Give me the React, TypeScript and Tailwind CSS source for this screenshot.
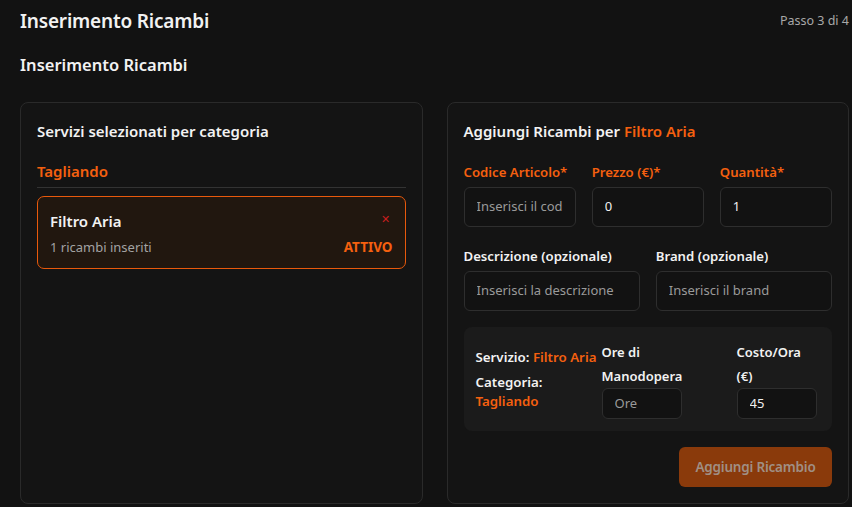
import React from "react";

const F = { fontFamily: '"Noto Sans", "Open Sans", sans-serif' };

function Input({ value, placeholder, className = "" }: { value?: string; placeholder?: string; className?: string }) {
  return (
    <div className={`flex items-center rounded-[6px] border border-[#2e2e2e] bg-[#121212] px-3 text-[13px] ${className}`}>
      <div className="w-full overflow-hidden whitespace-nowrap">
        {value ? <span className="text-[#f0f0f0]">{value}</span> : <span className="text-[#9a9a9a]">{placeholder}</span>}
      </div>
    </div>
  );
}

export default function App() {
  return (
    <div className="min-h-screen bg-[#121212] pl-5 pr-[3px] pt-[7px] text-[#f2f2f2]" style={F}>
      <div className="flex h-[28px] items-center justify-between">
        <h1 className="text-[19px] font-semibold tracking-[-0.2px]">Inserimento Ricambi</h1>
        <span className="text-[12.5px] text-[#a8a8a8]">Passo 3 di 4</span>
      </div>
      <h2 className="mt-[17px] h-[26px] text-[16.5px] font-semibold leading-[26px]">Inserimento Ricambi</h2>
      <div className="mt-[24px] grid grid-cols-2 gap-6">
        {/* Left card */}
        <div className="rounded-[8px] border border-[#2a2a2a] bg-[#141414] px-4 pt-4">
          <div className="h-[24px] text-[15px] font-semibold leading-[24px]">Servizi selezionati per categoria</div>
          <div className="mt-[16px] border-b border-[#333] pb-[4px] text-[15px] font-semibold leading-[24px] text-[#f5600f]">
            Tagliando
          </div>
          <div className="mt-[8px] rounded-[7px] border border-[#e8590c] bg-[#21170f] px-3 pb-[9px] pt-[12px]">
            <div className="flex items-start justify-between">
              <span className="text-[15px] font-semibold leading-[24px]">Filtro Aria</span>
              <span className="mr-[3px] text-[11px] leading-[20px] text-[#c81e1e]">✕</span>
            </div>
            <div className="mt-[2px] flex items-center justify-between">
              <span className="text-[13px] leading-[24px] text-[#a3a3a3]">1 ricambi inseriti</span>
              <span className="text-[13.5px] font-bold leading-[24px] text-[#f5600f]">ATTIVO</span>
            </div>
          </div>
        </div>

        {/* Right card */}
        <div className="rounded-[8px] border border-[#2a2a2a] bg-[#141414] px-4 pb-4 pt-4">
          <div className="h-[24px] text-[15px] font-semibold leading-[24px]">
            Aggiungi Ricambi per <span className="text-[#f5600f]">Filtro Aria</span>
          </div>
          <div className="mt-[19px] grid grid-cols-3 gap-4">
            <div>
              <div className="h-[20px] text-[13.2px] font-semibold leading-[20px] text-[#f5600f]">Codice Articolo*</div>
              <Input className="mt-[5px] h-[40px]" placeholder="Inserisci il codice articolo" />
            </div>
            <div>
              <div className="h-[20px] text-[13.2px] font-semibold leading-[20px] text-[#f5600f]">Prezzo (€)*</div>
              <Input className="mt-[5px] h-[40px]" value="0" />
            </div>
            <div>
              <div className="h-[20px] text-[13.2px] font-semibold leading-[20px] text-[#f5600f]">Quantità*</div>
              <Input className="mt-[5px] h-[40px]" value="1" />
            </div>
          </div>
          <div className="mt-[19px] grid grid-cols-2 gap-4">
            <div>
              <div className="h-[20px] text-[13.2px] font-semibold leading-[20px]">Descrizione (opzionale)</div>
              <Input className="mt-[5px] h-[40px]" placeholder="Inserisci la descrizione" />
            </div>
            <div>
              <div className="h-[20px] text-[13.2px] font-semibold leading-[20px]">Brand (opzionale)</div>
              <Input className="mt-[5px] h-[40px]" placeholder="Inserisci il brand" />
            </div>
          </div>

          <div className="mt-[16px] flex items-center rounded-[8px] bg-[#1b1b1b] px-3 py-3">
            <div className="w-[126px] text-[13.3px] font-semibold">
              <div className="leading-[19px] whitespace-nowrap">
                Servizio: <span className="text-[#f5600f]">Filtro Aria</span>
              </div>
              <div className="mt-[6px] leading-[19px]">
                Categoria:
                <br />
                <span className="text-[#f5600f]">Tagliando</span>
              </div>
            </div>
            <div className="w-[119px] pt-[1px]">
              <div className="text-[13px] font-semibold leading-[24px]">
                Ore di
                <br />
                Manodopera
              </div>
              <Input className="h-[31px] w-[80px]" placeholder="Ore" />
            </div>
            <div className="ml-4 w-[83px] pt-[1px]">
              <div className="text-[13px] font-semibold leading-[24px]">
                Costo/Ora
                <br />
                (€)
              </div>
              <Input className="h-[31px] w-[80px]" value="45" />
            </div>
          </div>

          <div className="mt-4 flex justify-end">
            <button className="h-[40px] w-[153px] rounded-[6px] bg-[#8a3a0b] text-[13.5px] font-semibold text-[#a08f84] tracking-[-0.2px]">
              Aggiungi Ricambio
            </button>
          </div>
        </div>
      </div>
    </div>
  );
}
